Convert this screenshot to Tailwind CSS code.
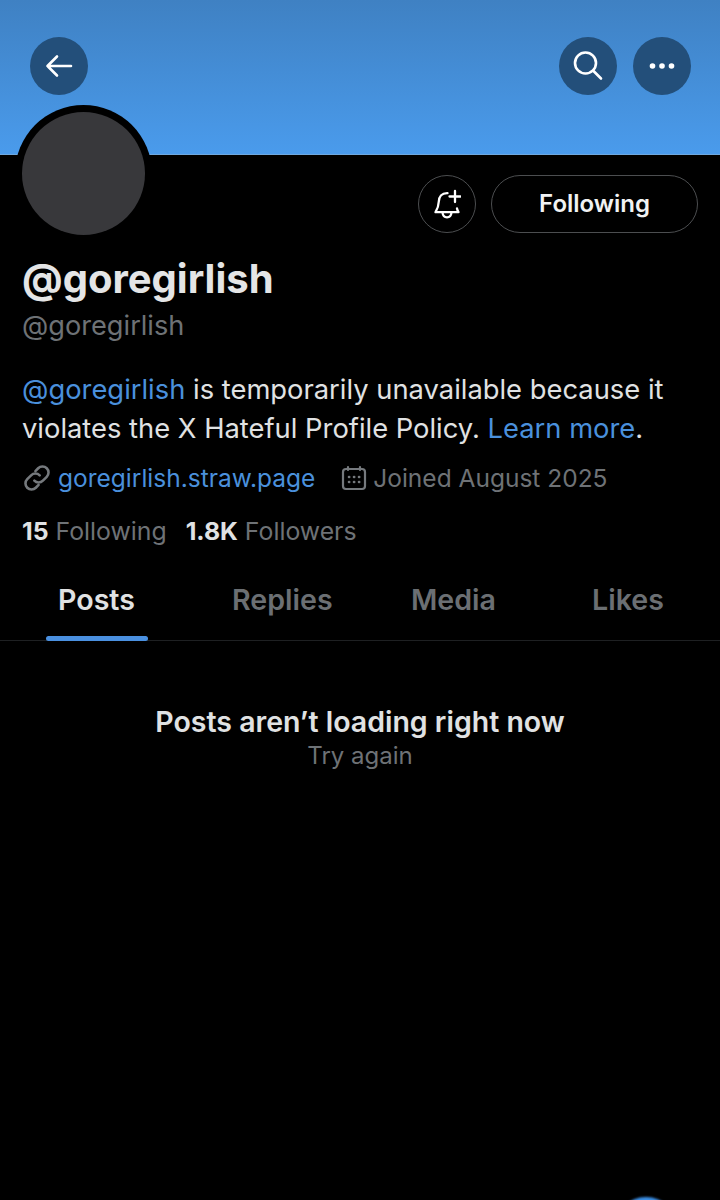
<!DOCTYPE html>
<html>
<head>
<meta charset="utf-8">
<script src="https://cdn.jsdelivr.net/npm/@tailwindcss/browser@4"></script>
</head>
<body class="bg-black">
<div class="relative w-[720px] h-[1200px] overflow-hidden bg-black font-['Inter','Liberation_Sans',sans-serif] text-[#e7e9ea]">
  <header class="h-[155px] bg-gradient-to-b from-[#3f81c3] to-[#4a9bec] border-b border-[#6fa9e0] pt-[37px] pl-[30px] pr-[29px] flex justify-between items-start">
    <button class="w-[58px] h-[58px] rounded-full bg-[#234f7a] flex items-center justify-center">
      <svg class="w-[30px] h-[30px]" viewBox="0 0 30 30" fill="none" stroke="#fff" stroke-width="2.6" stroke-linecap="round" stroke-linejoin="round"><path d="M27 15H3.5M13 5.5 3.5 15l9.5 9.5"/></svg>
    </button>
    <div class="flex gap-[16px]">
      <button class="w-[58px] h-[58px] rounded-full bg-[#234f7a] flex items-center justify-center">
        <svg class="w-[30px] h-[30px]" viewBox="0 0 30 30" fill="none" stroke="#fff" stroke-width="2.6" stroke-linecap="round"><circle cx="12.5" cy="12" r="10.5"/><path d="M20.5 20l7.5 7.5"/></svg>
      </button>
      <button class="w-[58px] h-[58px] rounded-full bg-[#234f7a] flex items-center justify-center">
        <svg class="w-[30px] h-[10px]" viewBox="0 0 30 10" fill="#fff"><circle cx="5.5" cy="5" r="2.8"/><circle cx="15" cy="5" r="2.8"/><circle cx="24.5" cy="5" r="2.8"/></svg>
      </button>
    </div>
  </header>

  <div class="absolute left-[15px] top-[105px] w-[137px] h-[137px] rounded-full bg-black flex items-center justify-center">
    <div class="w-[123px] h-[123px] rounded-full bg-[#38383b]"></div>
  </div>

  <div class="flex justify-end gap-[15px] pt-[20px] pr-[22px]">
    <button class="w-[58px] h-[58px] rounded-full border border-[#4c4e50] flex items-center justify-center">
      <svg class="w-[28px] h-[30px]" viewBox="0 0 28 30" fill="none" stroke="#fff" stroke-width="2.3" stroke-linecap="round" stroke-linejoin="round"><path d="M14.5 4.2C8.5 4 6 8 5.8 12.5 5.6 17 4.5 20 2.5 23.2H25.5C24.8 22 24.3 21 24 19.5"/><path d="M9.5 23.5c.3 3 2.2 4.8 4.5 4.8s4.2-1.8 4.5-4.8"/><path d="M22 2v11M16.5 7.5h11"/></svg>
    </button>
    <button class="w-[207px] h-[58px] rounded-full border border-[#4c4e50] text-[24px] font-semibold text-[#f1f2f3] leading-none">Following</button>
  </div>

  <section class="pl-[22px] pr-[22px]">
    <h1 class="mt-[23px] text-[40px] leading-[46px] font-bold text-[#e4e5e6]">@goregirlish</h1>
    <p class="mt-[1px] text-[27.2px] leading-[46px] text-[#6e7276]">@goregirlish</p>
    <p class="mt-[21px] text-[27.35px] leading-[39px] text-[#e0e2e3]"><span class="text-[#4a90dc]">@goregirlish</span> is temporarily unavailable because it<br>violates the X Hateful Profile Policy. <span class="text-[#4a90dc]">Learn more</span>.</p>
    <div class="mt-[10px] flex items-center h-[40px] text-[24.5px]">
      <svg class="w-[30px] h-[30px]" viewBox="0 0 28 28" fill="none" stroke="#75797d" stroke-width="2.4" stroke-linecap="round"><path d="M12.5 7.5l2.6-2.6a5.6 5.6 0 0 1 8 8l-3.6 3.6a5.6 5.6 0 0 1-8 0"/><path d="M15.5 20.5l-2.6 2.6a5.6 5.6 0 0 1-8-8l3.6-3.6a5.6 5.6 0 0 1 8 0"/></svg>
      <span class="ml-[6px] text-[#4a90dc]">goregirlish.straw.page</span>
      <svg class="w-[26px] h-[26px] ml-[26px]" viewBox="0 0 26 26" fill="none" stroke="#75797d" stroke-width="2.2" stroke-linecap="round"><rect x="2" y="4" width="22" height="20" rx="3"/><path d="M7 2v3M19 2v3"/><path d="M8 12h.2M13 12h.2M18 12h.2M8 17h.2M13 17h.2M18 17h.2" stroke-width="2.6"/></svg>
      <span class="ml-[6px] text-[#6e7276]">Joined August 2025</span>
    </div>
    <div class="mt-[14px] flex h-[40px] items-center text-[24.8px] text-[#6e7276]">
      <span><b class="font-bold text-[#e0e2e3]">15</b> Following</span>
      <span class="ml-[19px]"><b class="font-bold text-[#e0e2e3]">1.8K</b> Followers</span>
    </div>
  </section>

  <nav class="relative mt-[20px] h-[69px] border-b border-[#1e2022] text-[28.6px] font-semibold text-[#6b6f73]">
    <span class="absolute left-[58px] top-[7px] text-[#e0e2e3]">Posts</span>
    <span class="absolute left-[232px] top-[7px]">Replies</span>
    <span class="absolute left-[411px] top-[7px]">Media</span>
    <span class="absolute left-[592px] top-[7px]">Likes</span>
    <div class="absolute left-[46px] bottom-[-1px] w-[102px] h-[5px] rounded-full bg-[#4a90e0]"></div>
  </nav>

  <div class="mt-[63px] text-center">
    <p class="text-[28.5px] leading-[36px] font-semibold text-[#e0e2e3]">Posts aren’t loading right now</p>
    <p class="text-[24px] leading-[32px] text-[#6e7276]">Try again</p>
  </div>

  <div class="absolute left-[615px] top-[1197px] w-[62px] h-[62px] rounded-full bg-[#3b8fe6] blur-[1px]"></div>
</div>
</body>
</html>
